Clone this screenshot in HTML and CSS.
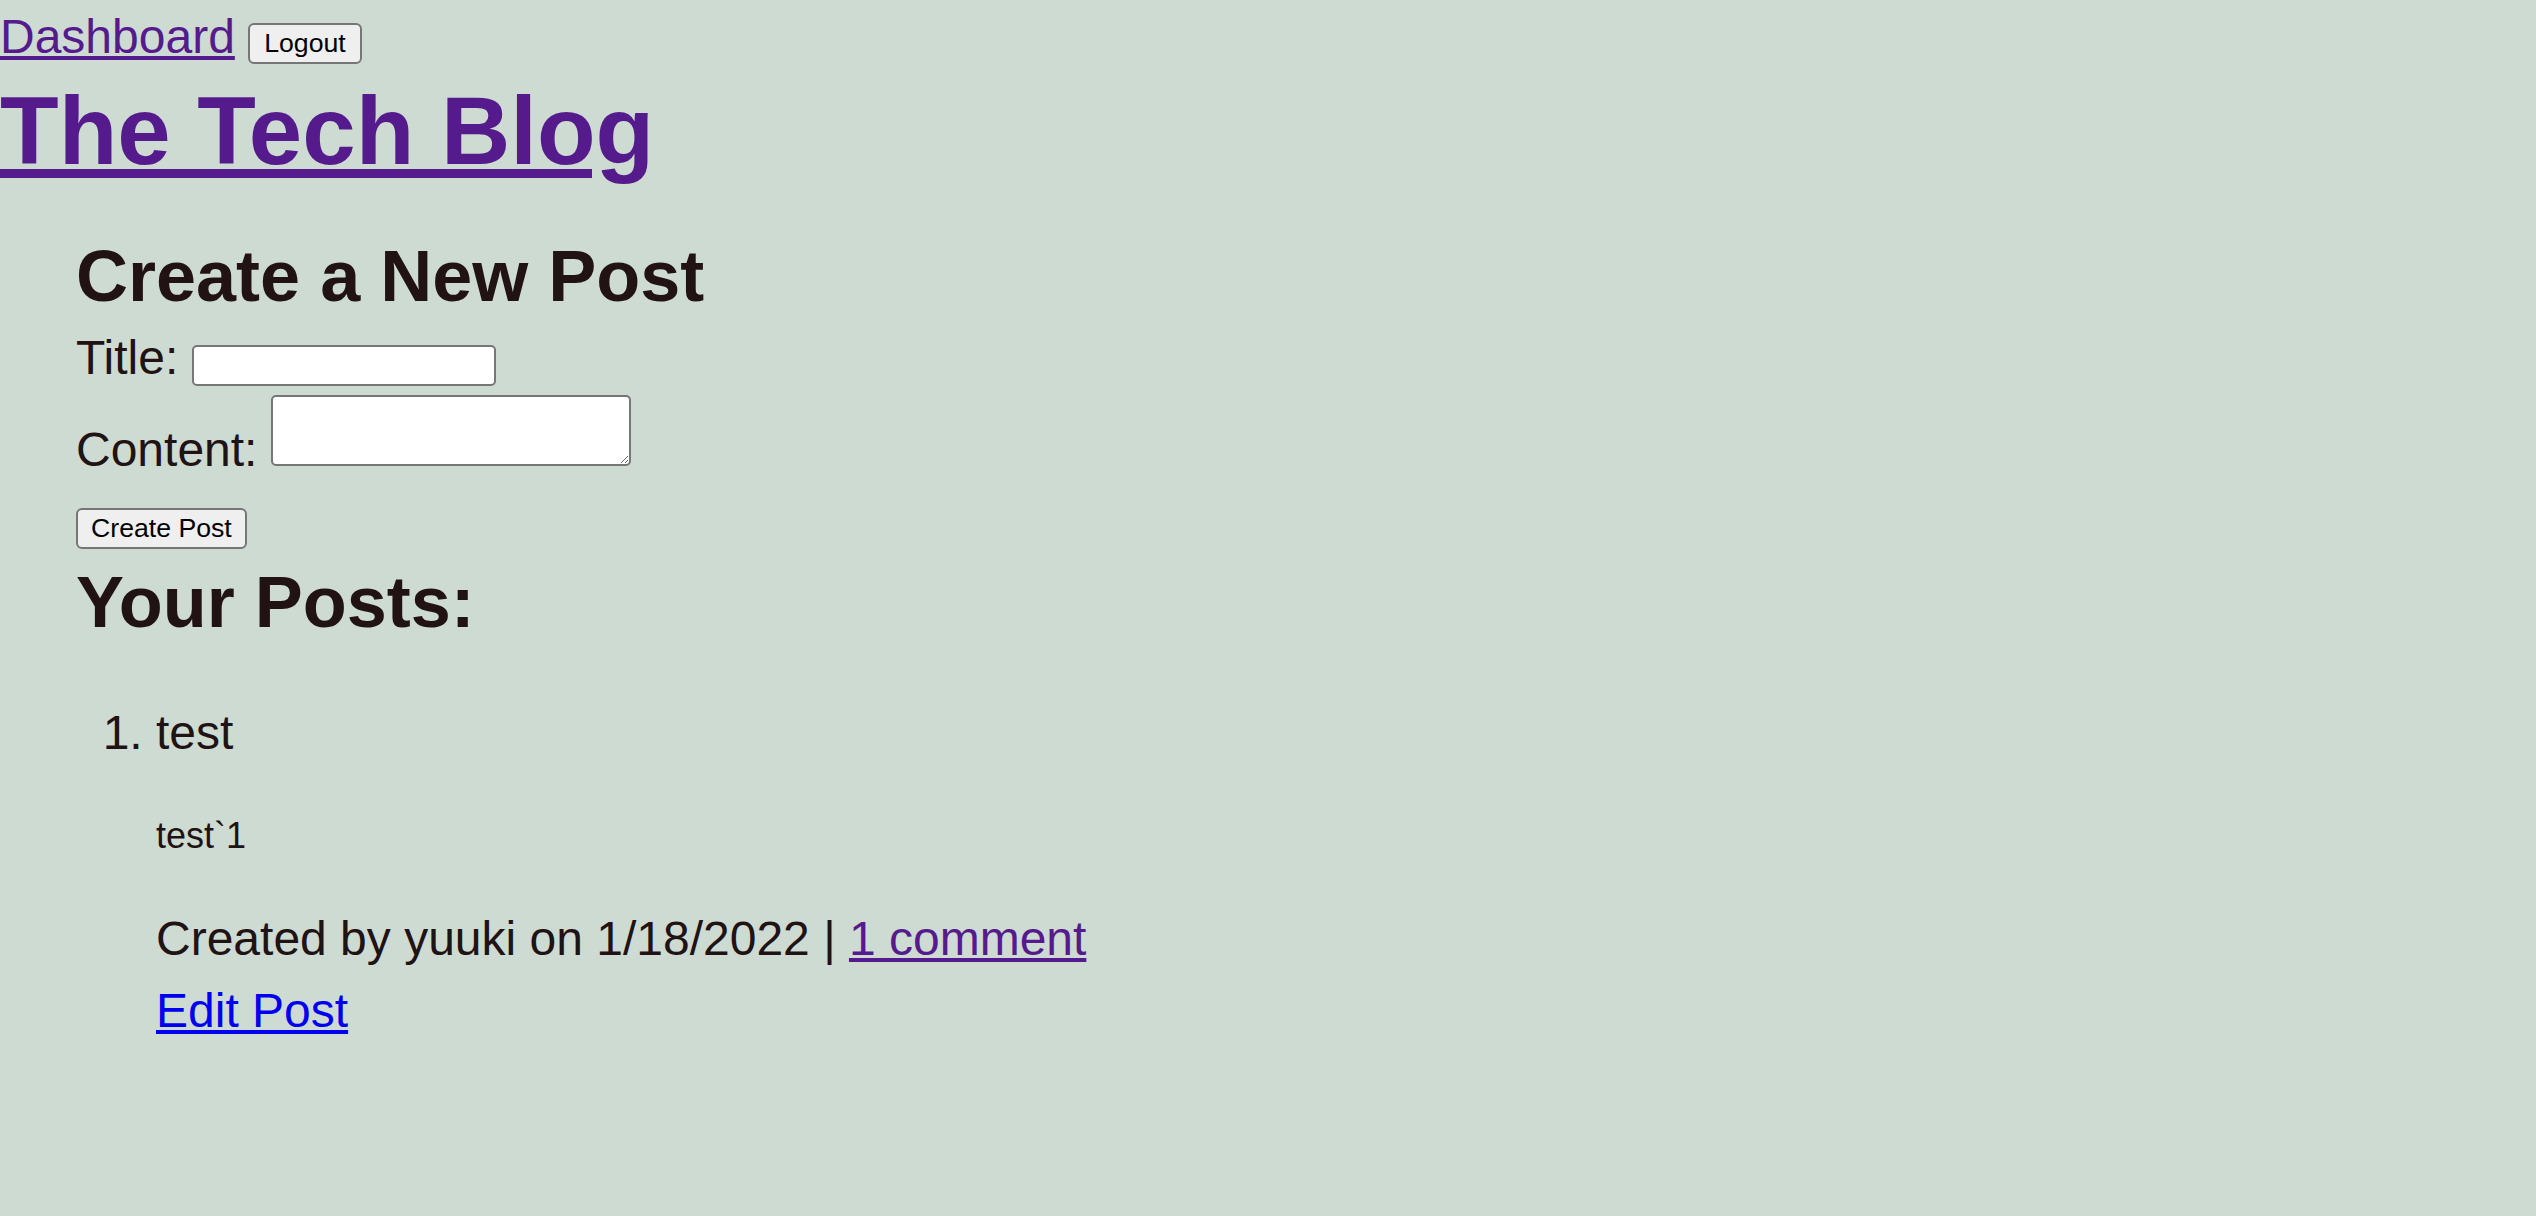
FILE: index.html
```html
<!DOCTYPE html>
<html lang="en">
<head>
<meta charset="utf-8">
<title>The Tech Blog</title>
<link rel="stylesheet" href="styles.css">
</head>
<body>
<header class="site-header">
  <nav class="nav"><a href="#" class="nav-link">Dashboard</a> <button class="btn btn-logout" type="button">Logout</button></nav>
  <h1 class="site-title"><a href="#" class="title-link">The Tech Blog</a></h1>
</header>
<main class="dashboard">
  <h2 class="section-title">Create a New Post</h2>
  <form class="post-form">
    <div class="field"><label class="field-label">Title:</label> <input class="text-input" type="text"></div>
    <div class="field field-content"><label class="field-label">Content:</label> <textarea class="text-area"></textarea></div>
    <button class="btn btn-submit" type="button">Create Post</button>
  </form>
  <h2 class="section-title posts-title">Your Posts:</h2>
  <ol class="post-list">
    <li class="post">
      <div class="post-title">test</div>
      <p class="post-body">test`1</p>
      <p class="post-meta">Created by yuuki on 1/18/2022 | <a href="#" class="comment-link">1 comment</a></p>
      <a href="#" class="edit-link">Edit Post</a>
    </li>
  </ol>
</main>
</body>
</html>
```
FILE: styles.css
```css
html, body {
  margin: 0;
  padding: 0;
}

body {
  background: #cddbd2;
  color: #211213;
  font-family: "Liberation Sans", Arial, Helvetica, sans-serif;
  font-size: 48px;
}

.nav {
  padding-top: 9px;
}

.nav-link,
.title-link,
.comment-link {
  color: #551a8b;
}

.btn {
  font-family: "Liberation Sans", Arial, sans-serif;
  font-size: 26.67px;
  color: #000;
  background: #efefef;
  border: 2px solid #767676;
  border-radius: 6px;
  padding: 3px 14px;
  margin: 0;
  line-height: normal;
}

.btn-logout {
  vertical-align: 1px;
}

.site-title {
  font-size: 96px;
  font-weight: bold;
  margin: 12px 0 49px;
}

.dashboard {
  padding-left: 76px;
}

.section-title {
  font-size: 72px;
  font-weight: bold;
  margin: 0;
}

.field {
  margin-top: 13px;
}

.field-content {
  margin-top: 9px;
}

.text-input,
.text-area {
  box-sizing: border-box;
  border: 2px solid #767676;
  border-radius: 5px;
  background: #fff;
  margin: 0;
  font-family: "Liberation Sans", Arial, sans-serif;
  font-size: 26.67px;
}

.text-input {
  width: 304px;
  height: 41px;
  padding: 3px 4px;
}

.text-area {
  width: 360px;
  height: 71px;
  padding: 3px 4px;
  vertical-align: baseline;
}

.btn-submit {
  display: block;
  margin-top: 31px;
  padding: 3px 13px;
}

.posts-title {
  margin-top: 12px;
}

.post-list {
  margin: 62px 0 0;
  padding-left: 80px;
}

.post-body {
  font-size: 36px;
  margin: 55px 0 0;
}

.post-meta {
  margin: 54px 0 0;
}

.edit-link {
  display: block;
  margin-top: 17px;
  width: max-content;
  color: #0000ee;
}
```
